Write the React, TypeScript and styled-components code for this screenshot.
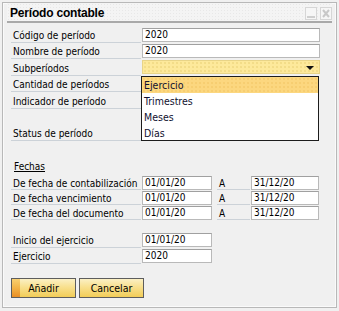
import React from "react";
import styled, { createGlobalStyle } from "styled-components";

const Global = createGlobalStyle`
  html, body { margin: 0; padding: 0; background: #f0f0f0; }
  body { font-family: "DejaVu Sans Condensed", "DejaVu Sans", sans-serif; font-stretch: condensed; font-size: 10px; color: #000; }
  * { box-sizing: border-box; }
`;

const Page = styled.div`
  width: 339px;
  height: 311px;
  padding: 2px;
  background: #f0f0f0;
`;

const Window = styled.div`
  position: relative;
  width: 335px;
  height: 306px;
  border: 1px solid #b8b8b8;
  background: #f0f0f0;
  box-shadow: inset 0 0 0 1px #fafafa;
  padding: 0 4px;
`;

const TitleBar = styled.div`
  height: 20px;
  display: flex;
  align-items: center;
  justify-content: space-between;
  padding: 1px 0 0 3px;
  background-color: #f4f4f4;
  background-image: radial-gradient(rgba(0, 0, 0, 0.05) 0.6px, transparent 0.8px);
  background-size: 3px 3px;
  border-bottom: 2px solid #a9a9a9;
`;

const Title = styled.div`
  font-family: "Liberation Sans", Arial, sans-serif;
  font-stretch: normal;
  font-weight: bold;
  font-size: 12px;
  letter-spacing: -0.2px;
  color: #000;
`;

const TitleButtons = styled.div`
  display: flex;
  gap: 3px;
  margin-top: 2px;
`;

const TitleButton = styled.div`
  width: 12px;
  height: 13px;
  border: 1px solid #d6d6d6;
  background: #f6f6f6;
  display: flex;
  align-items: center;
  justify-content: center;
`;

const Form = styled.div`
  position: relative;
  padding: 4px 0 0 4px;
  display: flex;
  flex-direction: column;
`;

const Row = styled.div<{ $h: number; $cols?: string }>`
  display: grid;
  grid-template-columns: ${(p) => p.$cols || "130px 178px"};
  column-gap: 1px;
  height: ${(p) => p.$h}px;
  align-items: start;
`;

const Label = styled.div`
  height: 100%;
  display: flex;
  align-items: center;
  padding-left: 2px;
  padding-top: 2px;
  border-bottom: 1px solid #ccd2d8;
  white-space: nowrap;
  overflow: hidden;
  font-size: 10px;
  color: #000;
`;

const Field = styled.div<{ $yellow?: boolean }>`
  margin-top: 1px;
  height: 14px;
  border: 1px solid ${(p) => (p.$yellow ? "#e8d488" : "#b9b9b9")};
  border-top-color: ${(p) => (p.$yellow ? "#e8d488" : "#a0a0a0")};
  background-color: ${(p) => (p.$yellow ? "#fde99b" : "#ffffff")};
  background-image: ${(p) =>
    p.$yellow ? "radial-gradient(rgba(190,150,40,0.35) 0.6px, transparent 0.8px)" : "none"};
  background-size: 4px 4px;
  display: flex;
  align-items: center;
  justify-content: space-between;
  padding: 0 5px 0 2px;
  font-size: 10px;
  line-height: 12px;
  color: #000;
`;

const Spacer = styled.div<{ $h: number }>`
  height: ${(p) => p.$h}px;
`;

const SectionTitle = styled.div`
  height: 18px;
  padding-left: 3px;
  display: flex;
  align-items: flex-end;
  padding-bottom: 3px;
  text-decoration: underline;
  font-size: 10px;
`;

const Arrow = styled.div`
  width: 0;
  height: 0;
  border-left: 4px solid transparent;
  border-right: 4px solid transparent;
  border-top: 4px solid #111;
  margin-top: 1px;
`;

const Dropdown = styled.div`
  position: absolute;
  left: 134px;
  top: 53px;
  width: 178px;
  height: 65px;
  border: 1px solid #1c1c1c;
  background: #ffffff;
  display: flex;
  flex-direction: column;
  z-index: 2;
`;

const Option = styled.div<{ $active?: boolean }>`
  height: 16px;
  flex: none;
  display: flex;
  align-items: center;
  padding-left: 2px;
  font-size: 10.5px;
  color: #101030;
  background-color: ${(p) => (p.$active ? "#fcd77f" : "transparent")};
  background-image: ${(p) =>
    p.$active ? "radial-gradient(rgba(220,150,30,0.3) 0.6px, transparent 0.8px)" : "none"};
  background-size: 4px 4px;
`;

const Buttons = styled.div`
  display: flex;
  gap: 3px;
  margin-top: 14px;
`;

const Button = styled.div`
  position: relative;
  width: 65px;
  height: 20px;
  border: 1px solid #5d5d5d;
  background: linear-gradient(#fbf0c4 0%, #f8e08e 45%, #f2cd58 100%);
  display: flex;
  align-items: center;
  justify-content: center;
  font-size: 10.5px;
  color: #000;
`;

const ButtonStrip = styled.div`
  position: absolute;
  left: 0;
  top: 0;
  bottom: 0;
  width: 8px;
  background-image: linear-gradient(#f8d070 0%, #f3b346 50%, #ea8e24 100%);
`;

const ButtonText = styled.span`
  position: relative;
`;

const dateCols = "130px 70px 37px 68px";

const ALabel = styled(Label)`
  margin-left: 4px;
`;

export default function App() {
  return (
    <>
      <Global />
      <Page>
        <Window>
          <TitleBar>
            <Title>Período contable</Title>
            <TitleButtons>
              <TitleButton>
                <svg width="10" height="11" viewBox="0 0 10 11">
                  <rect x="1" y="8" width="8" height="2" fill="#cfcfcf" />
                </svg>
              </TitleButton>
              <TitleButton>
                <svg width="10" height="11" viewBox="0 0 10 11">
                  <path d="M2 2 L8 9 M8 2 L2 9" stroke="#c8c8c8" strokeWidth="2" />
                </svg>
              </TitleButton>
            </TitleButtons>
          </TitleBar>
          <Form>
            <Row $h={16}>
              <Label>Código de período</Label>
              <Field>2020</Field>
            </Row>
            <Row $h={16}>
              <Label>Nombre de período</Label>
              <Field>2020</Field>
            </Row>
            <Row $h={17}>
              <Label>Subperíodos</Label>
              <Field $yellow>
                <span />
                <Arrow />
              </Field>
            </Row>
            <Row $h={16}>
              <Label>Cantidad de períodos</Label>
            </Row>
            <Row $h={17}>
              <Label>Indicador de período</Label>
            </Row>
            <Spacer $h={16} />
            <Row $h={16}>
              <Label>Status de período</Label>
            </Row>
            <Spacer $h={16} />
            <SectionTitle>Fechas</SectionTitle>
            <Row $h={15} $cols={dateCols}>
              <Label>De fecha de contabilización</Label>
              <Field>01/01/20</Field>
              <ALabel>A</ALabel>
              <Field>31/12/20</Field>
            </Row>
            <Row $h={15} $cols={dateCols}>
              <Label>De fecha vencimiento</Label>
              <Field>01/01/20</Field>
              <ALabel>A</ALabel>
              <Field>31/12/20</Field>
            </Row>
            <Row $h={15} $cols={dateCols}>
              <Label>De fecha del documento</Label>
              <Field>01/01/20</Field>
              <ALabel>A</ALabel>
              <Field>31/12/20</Field>
            </Row>
            <Spacer $h={12} />
            <Row $h={16} $cols="130px 70px">
              <Label>Inicio del ejercicio</Label>
              <Field>01/01/20</Field>
            </Row>
            <Row $h={16} $cols="130px 70px">
              <Label>Ejercicio</Label>
              <Field>2020</Field>
            </Row>
            <Buttons>
              <Button>
                <ButtonStrip />
                <ButtonText>Añadir</ButtonText>
              </Button>
              <Button>
                <ButtonText>Cancelar</ButtonText>
              </Button>
            </Buttons>
            <Dropdown>
              <Option $active>Ejercicio</Option>
              <Option>Trimestres</Option>
              <Option>Meses</Option>
              <Option>Días</Option>
            </Dropdown>
          </Form>
        </Window>
      </Page>
    </>
  );
}
